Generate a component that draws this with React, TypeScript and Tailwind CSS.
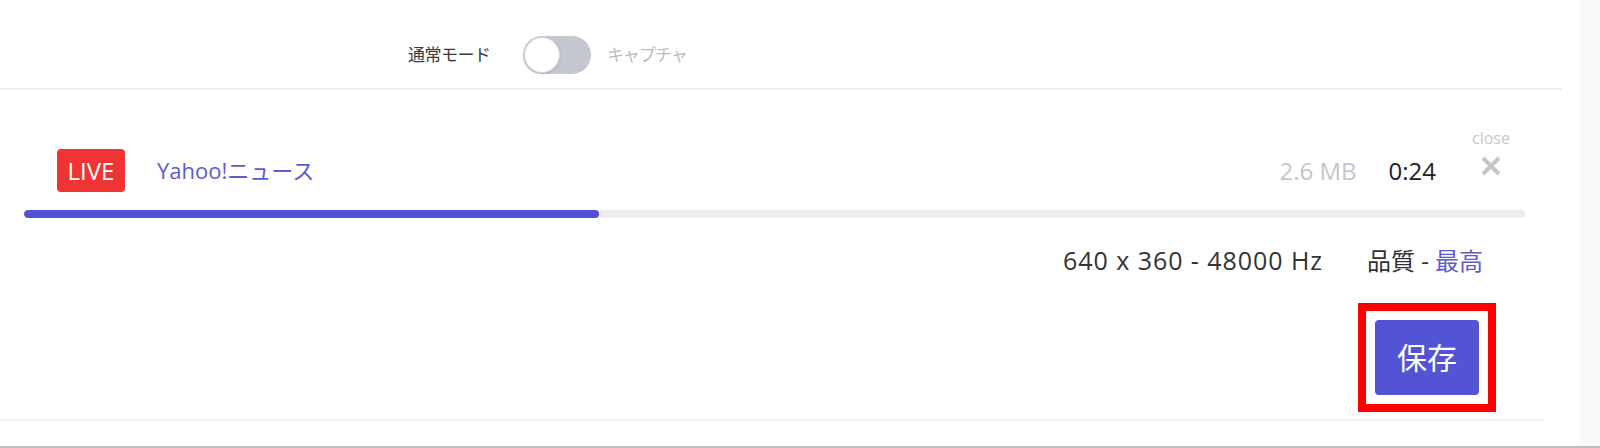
import React from "react";

export default function App() {
  const font = { fontFamily: "'Open Sans','Noto Sans CJK JP',sans-serif" };
  return (
    <div className="w-[1600px] h-[448px] bg-white overflow-hidden flex flex-col" style={font}>
      <div className="flex h-[446px]">
        <div className="w-[1580px] flex flex-col">
          {/* header */}
          <div className="w-[1562px] h-[90px] border-b-2 border-[#f0f0f0] flex items-center pl-[408px] pt-[21px]">
            <span className="text-[17px] text-[#3a3a3a] tracking-[-0.5px] w-[115px]">通常モード</span>
            <div className="w-[68px] h-[38px] rounded-full bg-[#c3c7cf] flex items-center p-[1px]">
              <div className="w-[36px] h-[36px] rounded-full bg-white border border-[#d8d8d8] shadow-sm" />
            </div>
            <span className="ml-[16px] text-[17px] text-[#b9bdc5] tracking-[-1px]">キャプチャ</span>
          </div>

          {/* title row */}
          <div className="w-[1562px] mt-[59px] flex items-center pl-[57px] pr-[53px] h-[43px]">
            <div className="w-[68px] h-[43px] rounded-[4px] bg-[#f03333] flex items-center justify-center text-white text-[24px]">
              LIVE
            </div>
            <span className="ml-[32px] text-[22px] text-[#5b5bd6]">Yahoo!ニュース</span>
            <div className="flex-1" />
            <span className="text-[24px] text-[#c3c6cd]">2.6 MB</span>
            <span className="ml-[32px] text-[24px] text-[#222]">0:24</span>
            <div className="ml-[36px] relative w-[37px] h-[22px] mb-[10px] flex justify-center">
              <span className="absolute -top-[25px] left-0 text-[16px] leading-[16px] text-[#c8c8c8]">close</span>
              <svg width="22" height="22" viewBox="0 0 22 22">
                <path d="M3 3 L19 19 M19 3 L3 19" stroke="#c6c6c9" strokeWidth="4" strokeLinecap="butt" />
              </svg>
            </div>
          </div>

          {/* progress */}
          <div className="ml-[24px] mt-[18px] w-[1501px] h-[8px] rounded-full bg-[#ececf1] overflow-hidden">
            <div className="h-full rounded-full bg-[#5151d4]" style={{ width: "38.3%" }} />
          </div>

          {/* info row */}
          <div className="w-[1562px] mt-[27px] flex justify-end items-center pr-[79px] h-[32px] text-[25px] text-[#333]">
            <span className="tracking-[0.95px]">640 x 360 - 48000 Hz</span>
            <span className="ml-[44px] text-[24px]">品質 - </span>
            <span className="ml-[6px] text-[24px] text-[#5b5bd6]">最高</span>
          </div>

          {/* button row */}
          <div className="w-[1562px] mt-[26px] flex justify-end pr-[66px]">
            <div className="border-[8px] border-[#ff0000] px-[9px] py-[9px]">
              <button className="w-[104px] h-[75px] rounded-[4px] bg-[#5353d6] text-white text-[30px] flex items-center justify-center">
                保存
              </button>
            </div>
          </div>

          <div className="mt-[7px] w-[1543px] h-[2px] bg-[#f2f2f2]" />
        </div>
        <div className="flex-1 bg-[#f9f9f9]" />
      </div>
      <div className="h-[2px] bg-[#bdbdbd]" />
    </div>
  );
}
